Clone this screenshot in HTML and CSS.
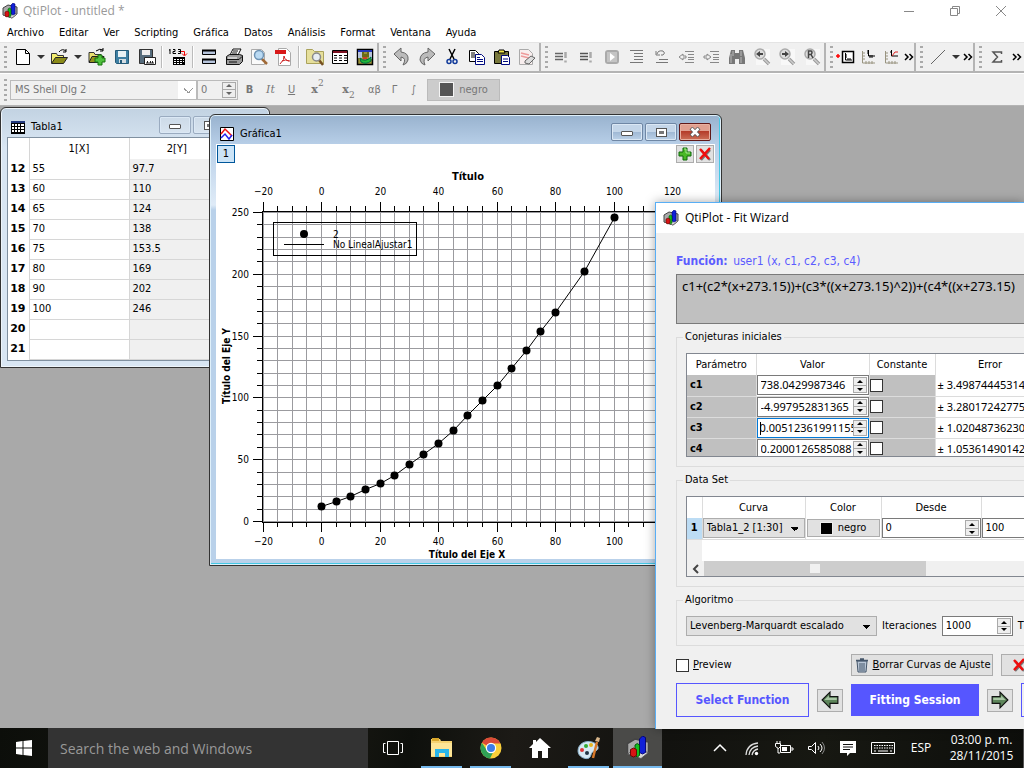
FILE: index.html
```html
<!DOCTYPE html>
<html lang="es">
<head>
<meta charset="utf-8">
<title>QtiPlot - untitled</title>
<link rel="stylesheet" href="styles.css">
</head>
<body>
<svg class="defs" aria-hidden="true">
  <symbol id="logo" viewBox="0 0 16 16"><path d="M1 5l5-3 9 2v7l-5 4-9-3z" fill="#aaa" stroke="#444"/><path d="M1 12l5-3 9 2-5 4z" fill="#d5d5d5" stroke="#555" stroke-width=".6"/><path d="M9 2l2-2 2 1v10l-2 1-2-1z" fill="#1020d8" stroke="#000070" stroke-width=".6"/><path d="M6 6l1.500-1L9 6v7l-1.500 1L6 13z" fill="#10c020" stroke="#004c00" stroke-width=".6"/><path d="M3 9l2-1 2 1v4l-2 1-2-1z" fill="#d81414" stroke="#600" stroke-width=".6"/></symbol>
  <symbol id="cross" viewBox="0 0 16 16"><path d="M4 4l9 10M13 4L4 14" stroke="#777" stroke-width="2.500"/><path d="M3 3l9 10M13 2L3 13" stroke="#f00d0d" stroke-width="2.500"/></symbol>
  <symbol id="lens" viewBox="0 0 20 20"><path d="M4 2h14v16H4z" fill="#f8f8f8"/><path d="M12 12l5 5" stroke="#999" stroke-width="3.500"/><path d="M12 12l5 5" stroke="#ccc" stroke-width="1.500"/><circle cx="8" cy="7" r="5" fill="#ddd" stroke="#aaa" stroke-width="1.500"/></symbol>
  <symbol id="arrow-left" viewBox="0 0 16 16"><path d="M1 8l7-7v4h7v6H8v4z" fill="#5d855a" stroke="#111"/><path d="M3 8l4-4v2h7v2z" fill="#a9c6a4"/></symbol>
  <symbol id="more" viewBox="0 0 10 10"><path d="M1 2l3 3-3 3M5.500 2l3 3-3 3" fill="none" stroke="currentColor" stroke-width="1.500"/></symbol>
  <symbol id="x" viewBox="0 0 12 10"><path d="M2 1l8 8M10 1L2 9" stroke="#555" stroke-width="4"/><path d="M2.500 1.500l7 7M9.500 1.500l-7 7" stroke="#fff" stroke-width="2.500"/></symbol>
</svg>

<div class="app">
  <header class="titlebar">
    <svg class="i16"><use href="#logo"/></svg><span>QtiPlot - untitled *</span>
    <div class="caption">
      <button aria-label="Minimizar"><svg viewBox="0 0 12 12"><path d="M1 6.500h10" stroke="#888"/></svg></button>
      <button aria-label="Restaurar"><svg viewBox="0 0 12 12"><path d="M1.500 3.500h7v7h-7zM3.500 3V1.500h7v7H9" fill="none" stroke="#888"/></svg></button>
      <button aria-label="Cerrar"><svg viewBox="0 0 12 12"><path d="M1 1l10 10M11 1L1 11" stroke="#888"/></svg></button>
    </div>
  </header>
  <nav class="menu"><a href="#">Archivo</a><a href="#">Editar</a><a href="#">Ver</a><a href="#">Scripting</a><a href="#">Gráfica</a><a href="#">Datos</a><a href="#">Análisis</a><a href="#">Format</a><a href="#">Ventana</a><a href="#">Ayuda</a></nav>

  <div class="toolrow">
    <div class="group"><i class="grip"></i>
      <button aria-label="Nuevo"><svg viewBox="0 0 20 20"><path d="M3.500 2.500h9l4 4v11h-13z" fill="#fff" stroke="#000"/><path d="M12.500 2.500v4h4" fill="none" stroke="#000"/></svg></button><button class="drop" aria-label="Opciones de nuevo"></button>
      <button aria-label="Abrir"><svg viewBox="0 0 20 20"><path d="M1.500 16V6.500h5l1 2h6V11" fill="#f4ee70" stroke="#333"/><path d="M1.500 16.500l4-6h12l-4 6z" fill="#8a8a18" stroke="#222"/><path d="M9 5q3-4 7-1m0-2v3h-3" fill="none" stroke="#000"/></svg></button><button class="drop" aria-label="Opciones de abrir"></button>
      <button aria-label="Añadir proyecto"><svg viewBox="0 0 20 20"><path d="M2 15V5.500h5l1 2h6V10" fill="#e9e070" stroke="#333"/><path d="M2 15.500l3-6h12l-3 6z" fill="#92921c" stroke="#222"/><path d="M9 4q4-3 7-1m0-2v3h-3" fill="none" stroke="#000"/><path d="M11 8h4v3h3v4h-3v3h-4v-3H8v-4h3z" fill="#4fc03c" stroke="#14720c"/></svg></button>
      <button aria-label="Guardar"><svg viewBox="0 0 20 20"><path d="M3.500 3.500h13v13h-12l-1-1z" fill="#3e7fa3" stroke="#245a78"/><path d="M6 4h8v6H6z" fill="#e8f1f5"/><path d="M7 12h7v4H7z" fill="#d5dde2"/><path d="M8 13h2v3H8z" fill="#245a78"/></svg></button>
      <button aria-label="Guardar plantilla"><svg viewBox="0 0 20 20"><path d="M2.500 2.500h13v14h-13z" fill="#566c7c" stroke="#333"/><path d="M5 3h8v5H5z" fill="#eee"/><path d="M7.500 10.500h11v7h-11z" fill="#fff" stroke="#222"/><path d="M9 16h8M10.500 14v2M13.500 14v2M15.500 14v2" stroke="#222"/></svg></button>
      <i class="sep"></i>
      <button aria-label="Importar ASCII"><svg viewBox="0 0 20 20"><path d="M2 2v5M1 3h1M5 2.500h2v2H5v2h3M10 2.500h2.500v4H10M10.500 4.500H12" fill="none" stroke="#000"/><path d="M13 4.500h3.500V8M14 6.500l2.500 2.500L19 6.500" fill="none" stroke="#e00"/><path d="M5 10h12v8H5z" fill="#000"/><path d="M6 12h2v1H6zM9 12h2v1H9zM12 12h2v1h-2zM15 12h1v1h-1zM6 14h2v1H6zM9 14h2v1H9zM12 14h2v1h-2zM15 14h1v1h-1zM6 16h2v1H6zM9 16h2v1H9zM12 16h2v1h-2z" fill="#fff"/></svg></button>
      <i class="sep"></i>
      <button aria-label="Explorador"><svg viewBox="0 0 20 20"><path d="M3.500 3.500h13v4h-13zM3.500 12.500h13v4h-13z" fill="#b7c5dc" stroke="#000"/><path d="M3 3.500h14M3 12.500h14" stroke="#000" stroke-width="2"/></svg></button>
      <button aria-label="Imprimir"><svg viewBox="0 0 20 20"><path d="M6 8l3-6h8l-3 6z" fill="#fff" stroke="#111"/><path d="M9 4h5M8 6h5" stroke="#111"/><path d="M2.500 9.500l3-2h10l3 1v6l-3 3h-13z" fill="#999" stroke="#111"/><path d="M3 12.500h12l3-3M5 15h8" fill="none" stroke="#111"/><path d="M4 11h9" stroke="#fff"/></svg></button>
      <button aria-label="Vista previa"><svg viewBox="0 0 20 20"><path d="M2.500 2.500h10l3 3v12h-13z" fill="#fafafa" stroke="#aaa"/><path d="M12 11l6 6" stroke="#a06a38" stroke-width="2.500"/><circle cx="10" cy="8" r="4.500" fill="#badaf3" stroke="#6f94b5" stroke-width="1.500"/></svg></button>
      <button aria-label="Exportar PDF"><svg viewBox="0 0 20 20"><path d="M4.500 1.500h8l4 4v13h-12z" fill="#fff" stroke="#aaa"/><path d="M1 3h11v4H1z" fill="#d81818"/><path d="M6 17q5-5 4-8m0 0q1 5 6 5m-8 0q4-2 7 0" fill="none" stroke="#c22"/></svg></button>
      <i class="sep"></i>
      <button aria-label="Buscar"><svg viewBox="0 0 20 20"><path d="M1.500 16.500v-14h6l2 2h9v12z" fill="#e6df9b" stroke="#aaa25b"/><path d="M14 13l4 5" stroke="#765020" stroke-width="2.500"/><circle cx="11.500" cy="10" r="4" fill="#e7edf2" stroke="#888" stroke-width="1.500"/></svg></button>
      <button aria-label="Tabla nueva"><svg viewBox="0 0 20 20"><path d="M2.500 3.500h15v13h-15z" fill="#fff" stroke="#000"/><path d="M3 4h14v2H3z" fill="#7b0f20"/><path d="M4 8.500h3m2 0h3m2 0h3M4 11h3m2 0h3m2 0h3M4 13.500h3m2 0h3m2 0h3" stroke="#000"/></svg></button>
      <button aria-label="Registro"><svg viewBox="0 0 20 20"><path d="M2.500 2.500h15v15h-15z" fill="#9a9238" stroke="#000" stroke-width="1.500"/><path d="M3 3h14v2H3z" fill="#2437b8"/><path d="M3 5h4v6H3zM14 5h3v7h-3z" fill="#b8c4dc"/><path d="M7 5h2v2h3V5h2v5H7z" fill="#6b6b16"/><path d="M5 11q5 5 11-1v4q-5 4-10 1z" fill="#20b838" stroke="#064"/><path d="M8 11h4" stroke="#d22" stroke-width="1.500"/></svg></button>
    </div>
    <div class="group"><i class="grip"></i>
      <button aria-label="Deshacer"><svg viewBox="0 0 20 20"><path d="M2 7l7-6v4q8 1 7 8-1 4-5 5 4-7-2-8v4z" fill="#bbb" stroke="#666"/></svg></button>
      <button aria-label="Rehacer"><svg viewBox="0 0 20 20"><path d="M18 7l-7-6v4q-8 1-8 8 1 4 5 5-3-7 3-8v4z" fill="#bbb" stroke="#666"/></svg></button>
      <button aria-label="Cortar"><svg viewBox="0 0 20 20"><path d="M7 2l5 10M13 2L8 12" stroke="#000" stroke-width="1.500"/><circle cx="7" cy="14.500" r="2" fill="none" stroke="#113a9a" stroke-width="1.500"/><circle cx="13" cy="14.500" r="2" fill="none" stroke="#113a9a" stroke-width="1.500"/></svg></button>
      <button aria-label="Copiar"><svg viewBox="0 0 20 20"><path d="M2.500 3.500h6l3 3v8h-9z" fill="#fff" stroke="#000"/><path d="M4 6h4M4 8h5M4 10h5" stroke="#000"/><path d="M8.500 7.500h6l3 3v7h-9z" fill="#fff" stroke="#000a80"/><path d="M10 10.500h3m-3 2h6m-6 2h6" stroke="#000a80"/></svg></button>
      <button aria-label="Pegar"><svg viewBox="0 0 20 20"><path d="M2.500 4.500h14v12h-14z" fill="#78783c" stroke="#000"/><path d="M6 6l1-3h5l1 3z" fill="#f4e84c" stroke="#000"/><path d="M9.500 8.500h6l2 2v7h-8z" fill="#fff" stroke="#000a80"/><path d="M11 12h5m-5 2.500h5" stroke="#000a80"/></svg></button>
      <button aria-label="Borrar"><svg viewBox="0 0 20 20"><path d="M2.500 2.500h9l4 4v11h-13z" fill="#f8eeee" stroke="#aaa"/><path d="M4 6l8 2m-8 1l8 2" stroke="#e99" stroke-width="1.500"/><path d="M8 14l6-5 4 2-6 6-4-1z" fill="#ddd" stroke="#666"/></svg></button>
    </div>
    <div class="group dim"><i class="grip"></i>
      <button disabled aria-label="Ejecutar"><svg viewBox="0 0 20 20"><path d="M3 6.500h8M3 9.500h8M3 12.500h8" stroke="#666" stroke-width="1.500"/><path d="M13.500 5v6m0 2.500v2" stroke="#aaa" stroke-width="2.500"/></svg></button>
      <button disabled aria-label="Ejecutar todo"><svg viewBox="0 0 20 20"><path d="M3 6.500h8M3 9.500h8M3 12.500h8" stroke="#555" stroke-width="1.500"/><path d="M13.500 5v6m0 2.500v2" stroke="#aaa" stroke-width="2.500"/></svg></button>
      <button disabled aria-label="Reproducir"><svg viewBox="0 0 20 20"><rect x="3" y="3" width="14" height="14" rx="3" fill="#aaa"/><rect x="5" y="5" width="10" height="10" fill="#c4c4c4"/><path d="M8 6l5 4-5 4z" fill="#fff"/></svg></button>
      <button disabled aria-label="Comentar"><svg viewBox="0 0 20 20"><path d="M3 3.500h13M7 6.500h9M7 9.500h9M7 12.500h9M3 15.500h13" stroke="#777"/></svg></button>
      <button disabled aria-label="Descomentar"><svg viewBox="0 0 20 20"><path d="M4 8V4m0 4h4M5 7q1-4 6-3 3 2 0 4H9M7 12.500h9M4 15.500h12" fill="none" stroke="#777"/></svg></button>
      <button disabled aria-label="Reducir sangría"><svg viewBox="0 0 20 20"><path d="M8 4.500h9M11 7.500h6M11 10.500h6M11 12.500h6M8 15.500h9M2 10l4-3v2h3v2H6v2z" fill="none" stroke="#888"/></svg></button>
      <button disabled aria-label="Aumentar sangría"><svg viewBox="0 0 20 20"><path d="M8 4.500h9M11 7.500h6M11 10.500h6M11 12.500h6M8 15.500h9M9 10L5 7v2H2v2h3v2z" fill="none" stroke="#888"/></svg></button>
      <button aria-label="Encontrar"><svg viewBox="0 0 20 20"><path d="M4 3h4v3h4V3h4l2 8v6h-6v-5H8v5H2v-6z" fill="#777"/><path d="M4 7v9M6 4v5M14 4v5M14 10v6" stroke="#bbb"/></svg></button>
      <button aria-label="Anterior"><svg viewBox="0 0 20 20"><use href="#lens"/><path d="M4 7l4-3v2h3v2H8v2z" fill="#444"/></svg></button>
      <button aria-label="Siguiente"><svg viewBox="0 0 20 20"><use href="#lens"/><path d="M12 7L8 4v2H5v2h3v2z" fill="#444"/></svg></button>
      <button aria-label="Reemplazar"><svg viewBox="0 0 20 20"><use href="#lens"/><path d="M6.500 11V4H9q2 1 0 3.500H7M9 7.500l2 3.500" fill="none" stroke="#444" stroke-width="1.500"/></svg></button>
    </div>
    <div class="group tight"><i class="grip"></i>
      <button aria-label="Añadir capa"><svg viewBox="0 0 20 20"><path d="M0 9h4M2 7v4" stroke="#f00" stroke-width="1.500"/><path d="M6.500 4.500h11v11h-11z" fill="#fff" stroke="#000" stroke-width="1.500"/><path d="M9.500 6v7H16M9 8h2M9 10h2M12 11v2M14 11v2" fill="none" stroke="#000"/></svg></button>
      <button aria-label="Desplazar ejes"><svg viewBox="0 0 20 20"><path d="M3.500 4v12H16M3 6h3M3 9h3M3 12h3M7 14v3M10 14v3M13 14v3" fill="none" stroke="#999480"/><path d="M9.500 3v6H16M8 4h2M8 6h2M11 8v3M13 8v3" fill="none" stroke="#000"/></svg></button>
      <button aria-label="Curva"><svg viewBox="0 0 20 20"><path d="M3.500 4v12H16M3 6h3M3 9h3M3 12h3M7 14v3M10 14v3M13 14v3" fill="none" stroke="#999480"/><path d="M9.500 3v6H16M8 5h2" fill="none" stroke="#000"/><path d="M10 9l3-4h3" fill="none" stroke="#d22"/></svg></button>
      <button class="narrow" aria-label="Más"><svg><use href="#more"/></svg></button>
    </div>
    <div class="group short"><i class="grip"></i>
      <button aria-label="Línea"><svg viewBox="0 0 20 20"><path d="M3 17L17 3" stroke="#666"/></svg></button><button class="drop" aria-label="Opciones de línea"></button>
      <button class="narrow" aria-label="Más"><svg><use href="#more"/></svg></button>
    </div>
    <div class="group short last"><i class="grip"></i>
      <button aria-label="Suma"><svg viewBox="0 0 20 20"><path d="M14.500 7V5H6l4.500 5L6 15h8.500v-2" fill="none" stroke="#555" stroke-width="1.500"/></svg></button>
      <button class="narrow" aria-label="Más"><svg><use href="#more"/></svg></button>
    </div>
  </div>

  <div class="formatrow"><i class="grip"></i>
    <select class="font" disabled aria-label="Fuente"><option>MS Shell Dlg 2</option></select>
    <span class="spin size"><input value="0" disabled aria-label="Tamaño"><span class="steps"><button aria-label="Más"></button><button aria-label="Menos"></button></span></span>
    <button disabled><b>B</b></button><button class="serif" disabled><i>It</i></button><button disabled><u>U</u></button>
    <button class="script" disabled><b>x</b><sup>2</sup></button><button class="script" disabled><b>x</b><sub>2</sub></button>
    <button disabled>αβ</button><button class="thin" disabled>Γ</button><button class="thin" disabled>∫</button>
    <button class="color" disabled><i></i>negro</button>
  </div>

  <main class="mdi">
    <section class="win tabla">
      <header><svg class="i16" viewBox="0 0 16 16"><path d="M1 2h14v13H1z" fill="#000"/><path d="M2 5h2v2H2zM5 5h2v2H5zM8 5h2v2H8zM11 5h3v2h-3zM2 8h2v2H2zM5 8h2v2H5zM8 8h2v2H8zM11 8h3v2h-3zM2 11h2v2H2zM5 11h2v2H5zM8 11h2v2H8zM11 11h3v2h-3z" fill="#fff"/><path d="M1 2h14v2H1z" fill="#223a80"/></svg><h2>Tabla1</h2>
        <div class="ctl"><button aria-label="Minimizar"><i class="min"></i></button><button aria-label="Maximizar"><i class="max"></i></button><button aria-label="Cerrar"><svg><use href="#x"/></svg></button></div></header>
      <div class="pane">
        <table class="sheet">
          <thead><tr><th></th><th>1[X]</th><th>2[Y]</th></tr></thead>
          <tbody>
            <tr><th>12</th><td>55</td><td>97.7</td></tr><tr><th>13</th><td>60</td><td>110</td></tr>
            <tr><th>14</th><td>65</td><td>124</td></tr><tr><th>15</th><td>70</td><td>138</td></tr>
            <tr><th>16</th><td>75</td><td>153.5</td></tr><tr><th>17</th><td>80</td><td>169</td></tr>
            <tr><th>18</th><td>90</td><td>202</td></tr><tr><th>19</th><td>100</td><td>246</td></tr>
            <tr><th>20</th><td></td><td></td></tr><tr><th>21</th><td></td><td></td></tr>
          </tbody>
        </table>
      </div>
    </section>

    <section class="win active grafica">
      <header><svg class="i16" viewBox="0 0 16 16"><path d="M1.500 1.500h13v13h-13z" fill="#fff" stroke="#000"/><path d="M2 8l4-5 3 3 4 4" fill="none" stroke="#e11" stroke-width="1.500"/><path d="M2 12l4-4 4 5 3-4" fill="none" stroke="#22e" stroke-width="1.500"/></svg><h2>Gráfica1</h2>
        <div class="ctl"><button aria-label="Minimizar"><i class="min"></i></button><button aria-label="Maximizar"><i class="max"></i></button><button class="close" aria-label="Cerrar"><svg><use href="#x"/></svg></button></div></header>
      <div class="plot">
        <div class="layers"><button class="layer">1</button><span></span>
          <button aria-label="Añadir capa"><svg class="i16" viewBox="0 0 16 16"><path d="M6 2h4v4h4v4h-4v4H6v-4H2V6h4z" fill="#4ab828" stroke="#0f6a0a"/><path d="M7 3h2v4h4" fill="none" stroke="#a5e690"/></svg></button>
          <button aria-label="Quitar capa"><svg class="i16"><use href="#cross"/></svg></button></div>
        <svg id="chart" viewBox="0 20 499 395" role="img" aria-label="Título"></svg>
      </div>
    </section>
  </main>

  <footer class="taskbar">
    <button class="start" aria-label="Inicio"><svg viewBox="0 0 16 16"><path d="M0 2l6.500-1v6.500H0zM7.500 1L16 0v7.500H7.500zM0 8.500h6.500V15L0 14zM7.500 8.500H16V16l-8.500-1z" fill="#fff"/></svg></button>
    <input class="search" placeholder="Search the web and Windows" aria-label="Buscar">
    <button class="app-btn" aria-label="Vista de tareas"><svg viewBox="0 0 24 24"><path d="M6.500 5.500h11v13h-11zM4.500 7.500h-2v9h2M19.500 7.500h2v9h-2" fill="none" stroke="#fff"/></svg></button>
    <button class="app-btn open" aria-label="Explorador de archivos"><svg viewBox="0 0 24 24"><path d="M1 3h9l1 2h11v16H1z" fill="#f5d271"/><path d="M2 2h7v3H2z" fill="#d9a72b"/><path d="M1 7h21v13H1z" fill="#fde597"/><path d="M5 21v-8h14v8h-4v-4H9v4z" fill="#29b5ea"/></svg></button>
    <button class="app-btn open" aria-label="Chrome"><svg viewBox="0 0 24 24"><circle cx="12" cy="12" r="10.500" fill="#f9cf3a"/><path d="M12 12L2.900 6.750A10.500 10.500 0 0 1 21.500 7.500H12z" fill="#dc4a38"/><path d="M2.900 6.750A10.500 10.500 0 0 0 11 22.500l4-8-7 0z" fill="#2fa156"/><circle cx="12" cy="12" r="5.200" fill="#fff"/><circle cx="12" cy="12" r="4" fill="#3e7de8"/></svg></button>
    <button class="app-btn" aria-label="Inicio web"><svg viewBox="0 0 24 24"><path d="M12 2l11 10h-3v10h-6v-7h-4v7H4V12H1L5 8V4h3v2z" fill="#fff"/></svg></button>
    <button class="app-btn open" aria-label="Paint"><svg viewBox="0 0 24 24"><path d="M1 15C1 8 8 4 15 6s8 8 3 9-3 5-6 7S1 21 1 15z" fill="#d6e8f3" stroke="#8ab0ca"/><circle cx="5" cy="14" r="2" fill="#d33"/><circle cx="9" cy="10" r="2" fill="#3a3"/><circle cx="14" cy="9" r="2" fill="#e5b421"/><circle cx="10" cy="17" r="2" fill="#234"/><path d="M20 6l-4 16" stroke="#d7792b" stroke-width="2.500"/><path d="M18 5l2-4 3 1-1 4z" fill="#d8b68b"/></svg></button>
    <button class="app-btn open current" aria-label="QtiPlot"><svg><use href="#logo"/></svg></button>
    <div class="tray">
      <button aria-label="Mostrar iconos ocultos"><svg viewBox="0 0 20 20"><path d="M4 13l6-6 6 6" fill="none" stroke="#fff" stroke-width="1.500"/></svg></button>
      <button aria-label="Red"><svg viewBox="0 0 20 20"><path d="M4 17Q5 6 16 5M7 17q1-8 9-9M10 17q1-5 6-6" fill="none" stroke="#ddd" stroke-width="1.300"/><circle cx="14.500" cy="15.500" r="1.700" fill="#fff"/></svg></button>
      <button aria-label="Batería"><svg viewBox="0 0 20 20"><path d="M6.500 7.500h10v7h-10zM17 10h2v2h-2M1.500 5.500h5v3l-2 2-3-2zM3 3v2M6 3v2M4 10v5h2" fill="none" stroke="#fff"/><path d="M8 9h5v4H8z" fill="#fff"/></svg></button>
      <button aria-label="Volumen"><svg viewBox="0 0 20 20"><path d="M2.500 8.500h3l4-4v11l-4-4h-3zM12 8q2 2 0 4M14 6q4 4 0 8" fill="none" stroke="#fff"/><path d="M16 4q5 6 0 12" fill="none" stroke="#888"/></svg></button>
      <button aria-label="Notificaciones"><svg viewBox="0 0 20 20"><path d="M2 3h16v12h-6l-3 3v-3H2z" fill="#fff"/><path d="M5 6.500h10M5 9h10M5 11.500h7" stroke="#111"/></svg></button>
      <button class="kbd" aria-label="Teclado"><svg viewBox="0 0 24 14"><path d="M.5 1.500h23v11H.5z" fill="none" stroke="#fff"/><path d="M3 4.500h19M3 7h19" stroke="#fff" stroke-dasharray="1.500 1"/><path d="M3 10h2m2 0h10m2 0h2" stroke="#fff"/></svg></button>
      <button class="lang">ESP</button>
      <button class="clock"><time>03:00 p. m.</time><time>28/11/2015</time></button>
    </div>
  </footer>
</div>

<section class="wizard" role="dialog" aria-labelledby="wt">
  <header><svg class="i16"><use href="#logo"/></svg><h2 id="wt">QtiPlot - Fit Wizard</h2></header>
  <form>
    <p class="func"><label for="f"><b>Función:</b></label> <span>user1 (x, c1, c2, c3, c4)</span></p>
    <textarea id="f" readonly wrap="off">c1+(c2*(x+273.15))+(c3*((x+273.15)^2))+(c4*((x+273.15)</textarea>
    <fieldset><legend>Conjeturas iniciales</legend>
      <div class="box params">
        <table>
          <colgroup><col class="w69"><col class="w113"><col class="w66"><col class="w110"></colgroup>
          <thead><tr><th>Parámetro</th><th>Valor</th><th>Constante</th><th>Error</th></tr></thead>
          <tbody>
            <tr><th>c1</th><td><span class="spin"><input value="738.0429987346" aria-label="c1"><span class="steps"><button type="button" aria-label="Más"></button><button type="button" aria-label="Menos"></button></span></span></td><td class="grey"><input type="checkbox" aria-label="c1 constante"></td><td>± 3.49874445314</td></tr>
            <tr><th>c2</th><td><span class="spin"><input value="-4.997952831365" aria-label="c2"><span class="steps"><button type="button" aria-label="Más"></button><button type="button" aria-label="Menos"></button></span></span></td><td class="grey"><input type="checkbox" aria-label="c2 constante"></td><td>± 3.28017242775</td></tr>
            <tr><th>c3</th><td><span class="spin editing"><input value="0.00512361991155" aria-label="c3"><span class="steps"><button type="button" aria-label="Más"></button><button type="button" aria-label="Menos"></button></span></span></td><td class="grey"><input type="checkbox" aria-label="c3 constante"></td><td>± 1.02048736230</td></tr>
            <tr><th>c4</th><td><span class="spin"><input value="0.2000126585088" aria-label="c4"><span class="steps"><button type="button" aria-label="Más"></button><button type="button" aria-label="Menos"></button></span></span></td><td class="grey"><input type="checkbox" aria-label="c4 constante"></td><td>± 1.05361490142</td></tr>
          </tbody>
        </table>
      </div>
    </fieldset>
    <fieldset><legend>Data Set</legend>
      <div class="box data">
        <table>
          <colgroup><col class="w15"><col class="w103"><col class="w76"><col class="w100"><col class="w100"></colgroup>
          <thead><tr><th></th><th>Curva</th><th>Color</th><th>Desde</th><th></th></tr></thead>
          <tbody><tr><th>1</th><td><select aria-label="Curva"><option>Tabla1_2 [1:30]</option></select></td>
            <td><button type="button" class="color"><i></i>negro</button></td>
            <td><span class="spin"><input value="0" aria-label="Desde"><span class="steps"><button type="button" aria-label="Más"></button><button type="button" aria-label="Menos"></button></span></span></td>
            <td><span class="spin"><input value="100" aria-label="Hasta"></span></td></tr></tbody>
        </table>
        <div class="stub"></div>
        <div class="scroll"><button type="button" aria-label="Desplazar a la izquierda"><svg viewBox="0 0 10 10"><path d="M7 1L3 5l4 4" fill="none" stroke="#444" stroke-width="2"/></svg></button><div class="thumb"><i></i></div></div>
      </div>
    </fieldset>
    <fieldset class="algo"><legend>Algoritmo</legend>
      <select aria-label="Algoritmo"><option>Levenberg-Marquardt escalado</option></select>
      <label for="it">Iteraciones</label>
      <span class="spin"><input id="it" value="1000"><span class="steps"><button type="button" aria-label="Más"></button><button type="button" aria-label="Menos"></button></span></span>
      <span>T</span>
    </fieldset>
    <div class="actions">
      <label><input type="checkbox"> <span><u>P</u>review</span></label>
      <button type="button" class="push"><svg class="i16" viewBox="0 0 16 16"><path d="M3 4h10l-1 11H4z" fill="#b9c6d6" stroke="#45566a"/><path d="M6 6v8M8 6v8M10 6v8" stroke="#45566a"/><path d="M2 3.500h12M6 2h4" stroke="#45566a" stroke-width="1.500"/></svg><span><u>B</u>orrar Curvas de Ajuste</span></button>
      <button type="button" class="push" aria-label="Cerrar"><svg class="i16"><use href="#cross"/></svg></button>
    </div>
    <div class="steps-nav">
      <button type="button" class="page">Select Function</button>
      <button type="button" class="arrow" aria-label="Atrás"><svg><use href="#arrow-left"/></svg></button>
      <button type="button" class="page on">Fitting Session</button>
      <button type="button" class="arrow fwd" aria-label="Adelante"><svg><use href="#arrow-left"/></svg></button>
      <button type="button" class="page" aria-label="Página siguiente"></button>
    </div>
  </form>
</section>
<script src="chart.js"></script>
</body>
</html>
```

FILE: styles.css
```css
* { box-sizing: border-box; }
body { margin: 0; height: 100vh; overflow: hidden; position: relative; font: 11px/14px "DejaVu Sans Condensed", "Noto Sans", sans-serif; color: #000; }
button, input, select, textarea { font: inherit; color: inherit; margin: 0; padding: 0; border: 0; background: none; border-radius: 0; outline: 0; }
button { display: flex; align-items: center; justify-content: center; }
select { appearance: none; }
h2, p { margin: 0; font: inherit; }
.defs { position: absolute; width: 0; height: 0; }
.i16 { width: 16px; height: 16px; flex: none; }

.app { height: 100vh; display: flex; flex-direction: column; }
.titlebar { height: 22px; flex: none; display: flex; align-items: center; gap: 5px; padding-left: 2px; font: 12px/16px "Open Sans", sans-serif; color: #999; background: #fff; }
.caption { margin-left: auto; display: flex; }
.caption button { width: 46px; height: 20px; }
.caption svg { width: 12px; height: 12px; }
.menu { flex: none; height: 20px; display: flex; align-items: center; gap: 15px; padding: 1px 0 0 7px; background: #fff; }
.menu a { color: #000; text-decoration: none; }

.toolrow { flex: none; height: 31px; display: flex; background: #f0f0f0; border-top: 1px solid #e4e4e4; border-bottom: 2px solid #b4b4b4; }
.group { display: flex; align-items: center; flex: none; border-right: 2px solid #b4b4b4; }
.group button { width: 25px; height: 24px; }
.group.tight button { width: 23px; }
.group svg { width: 20px; height: 20px; }
.group button.drop { width: 12px; }
.drop::before { content: ""; border: 4px solid transparent; border-top-color: #333; border-bottom: 0; }
.group button.narrow { width: 11px; }
.group .narrow svg { width: 10px; height: 10px; }
.grip { width: 3px; height: 22px; margin: 0 3px 0 4px; flex: none; background: repeating-linear-gradient(#aaa 0 2px, transparent 2px 5px); }
.dim .grip, .tight .grip { margin-right: 1px; }
.short .grip { margin-right: 2px; }
.group.last { border: 0; }
.last .narrow { margin-left: 2px; }
.sep { width: 2px; height: 22px; margin: 0 2px; border-left: 1px solid #bbb; background: #fff; }

.formatrow { flex: none; height: 33px; display: flex; align-items: center; background: #f0f0f0; border-top: 1px solid #fff; border-bottom: 1px solid #b4b4b4; color: #777; }
.formatrow select.font { width: 187px; height: 20px; padding-left: 4px; border: 1px solid #bbb; opacity: 1; background: linear-gradient(-135deg, transparent 44%, #999 44% 60%, transparent 60%) 173px 7px / 5px 5px no-repeat, linear-gradient(135deg, transparent 44%, #999 44% 60%, transparent 60%) 177px 7px / 5px 5px no-repeat, linear-gradient(#fff, #fff) 100% 0 / 18px 100% no-repeat, #f0f0f0; color: #777; }
.formatrow > button { width: 21px; height: 21px; }
.formatrow > button.serif { font-family: "DejaVu Serif", serif; }
.formatrow > button.script { width: 31px; font-family: "DejaVu Serif", serif; }
.formatrow > button.thin { width: 19px; }
.script sup, .script sub { font-size: 9px; line-height: 9px; }
.script sup { align-self: flex-start; }
.script sub { align-self: flex-end; }
.color i { width: 13px; height: 13px; border: 1px solid #eee; background: #000; margin-right: 5px; flex: none; }
.formatrow > button.color { width: 73px; height: 22px; background: #ccc; border: 1px solid #bbb; margin-left: 4px; }
.formatrow .color i { background: #555; border-color: #f4f4f4; width: 15px; height: 15px; }

.spin { display: flex; height: 20px; border: 1px solid #7a7a7a; background: #fff; align-items: center; }
.spin input { flex: 1; min-width: 0; width: 100%; padding-left: 3px; }
.spin .steps { width: 14px; height: 16px; flex: none; display: flex; flex-direction: column; margin-right: 1px; }
.steps button { flex: 1; width: 100%; background: #eee; border: 1px solid #aaa; }
.steps button + button { border-top: 0; }
.steps button::before { content: ""; border: 3px solid transparent; border-top: 0; border-bottom-color: #000; }
.steps button + button::before { border-top: 3px solid #000; border-bottom: 0; }
.size { width: 41px; background: #f0f0f0; border-color: #bbb; margin-right: 1px; }
.size .steps button::before { border-bottom-color: #666; }
.size .steps button + button::before { border-top-color: #666; }
.spin.editing { border-color: #0078d7; }
.spin.editing input { padding-left: 2px; background: linear-gradient(#000, #000) 2px 1px / 1px 13px no-repeat; }

.mdi { flex: 1; min-height: 0; position: relative; overflow: hidden; background: #a9a9a9; }
.win { position: absolute; border: 1px solid #333; border-radius: 6px 6px 0 0; background: linear-gradient(#c2d2e2, #d9e6f3 40px); padding: 0 6px 6px; box-shadow: inset 0 0 0 1px #eef5fb; }
.win header { height: 29px; padding: 8px 2px 0 3px; display: flex; align-items: center; gap: 5px; }
.win.active { background: linear-gradient(#98b2ce, #b8cfe8 30px, #dfebf7 90px, #b9d1ea 95px); box-shadow: inset 0 0 0 1px #dff0fa, inset -1px -1px 0 1px #44c8e4; }
.ctl { margin: 0 2px 3px auto; display: flex; gap: 2px; }
.ctl button { width: 32px; height: 18px; border: 1px solid #6f87a5; border-radius: 2px; background: linear-gradient(#c4d6e9 50%, #9fb8d4 50%, #bcd2e9); box-shadow: inset 0 0 0 1px #dbe8f5; }
.tabla .ctl button { background: linear-gradient(#ccdae8, #d8e4f0); border-color: #9aabc0; }
.ctl .close { background: linear-gradient(#e0a090 45%, #b43b28 45%, #cc7058); border-color: #601818; box-shadow: inset 0 0 0 1px #e8b0a0; }
.ctl svg { width: 12px; height: 10px; }
.min { width: 12px; height: 5px; border: 1px solid #555; background: #fff; border-radius: 1px; margin-top: 3px; }
.max { width: 11px; height: 9px; border: 1px solid #555; background: #777; box-shadow: inset 0 0 0 2px #fff; }
.tabla { left: 0; top: 1px; width: 270px; }
.pane { border: 1px solid #8090a0; background: #fff; overflow: hidden; }
.sheet { width: 100%; table-layout: fixed; border-collapse: collapse; }
.sheet th, .sheet td { height: 20px; padding: 0 3px; border-right: 1px solid #d6d6d6; border-bottom: 1px solid #d6d6d6; text-align: left; }
.sheet th:first-child { width: 21px; padding: 0 3px 0 0; text-align: right; border-bottom: 0; font: bold 11px/14px "DejaVu Sans", sans-serif; }
.sheet thead th { height: 21px; text-align: center; font-weight: normal; border-bottom: 0; }
.sheet thead th:nth-child(2) { width: 100px; }
.sheet thead th:nth-child(3) { padding-right: 40px; }
.sheet td:last-child { background: #f0f0f0; }
.grafica { left: 209px; top: 8px; width: 513px; }
.plot { background: #fff; }
.layers { display: flex; gap: 2px; padding: 1px; }
.layers span { flex: 1; }
.layers button { width: 18px; height: 18px; border: 1px solid #adadad; background: #e1e1e1; }
.layers .layer { border-color: #00579b; background: #cce4f7; }
#chart { display: block; width: 100%; font: 10px "DejaVu Sans Condensed", sans-serif; }
#chart .bold { font-weight: bold; }
#chart .name { font: bold 11px "DejaVu Sans Condensed", sans-serif; }
#chart .grid { stroke: #9b9b9f; shape-rendering: crispEdges; }
#chart .axis { stroke: #000; fill: none; shape-rendering: crispEdges; }
#chart .curve { stroke: #000; fill: none; }

.wizard { position: absolute; left: 655px; right: 0; top: 202px; overflow: hidden; border: solid #58aef5; border-width: 1px 0 0 1px; background: #f0f0f0; box-shadow: 0 0 10px rgba(0, 0, 0, .35); white-space: nowrap; }
.wizard header { height: 30px; display: flex; align-items: center; gap: 6px; padding-left: 7px; background: #fff; font: 12px/16px "Open Sans", sans-serif; }
.wizard form { padding: 19px 0 12px 20px; width: 500px; }
.func { color: #5b5bff; font-size: 12px; line-height: 18px; margin-bottom: 4px; }
.func span { margin-left: 2px; }
textarea { display: block; width: 100%; height: 50px; resize: none; overflow: hidden; padding: 3px 5px; border: 1px solid #7a7a7a; background: #c0c0c0; font: 13px/16px "Noto Sans", sans-serif; }
fieldset { margin: 6px 0 0; padding: 9px; border: 1px solid #dcdcdc; min-width: 0; }
legend { margin-left: -3px; padding: 0 2px; }
.box { border: 1px solid #828790; background: #fff; overflow: hidden; }
.box table { border-collapse: collapse; table-layout: fixed; width: 0; min-width: 358px; }
.data table { min-width: 394px; }
.w69 { width: 69px; } .w113 { width: 113px; } .w66 { width: 66px; } .w110 { width: 110px; }
.w15 { width: 15px; } .w103 { width: 103px; } .w76 { width: 76px; } .w100 { width: 100px; }
.box th, .box td { padding: 0; height: 21px; font-weight: normal; border-right: 1px solid #dcdcdc; border-bottom: 1px solid #dcdcdc; }
.box thead th { height: 21px; border-bottom: 0; }
.params { height: 104px; }
.params tbody th { text-align: left; padding-left: 3px; font-weight: bold; background: #c0c0c0; }
.params td { font-family: "Noto Sans", sans-serif; }
.params td.grey { background: #c0c0c0; }
.params td:last-child { padding-left: 2px; }
.data { height: 81px; display: flex; flex-direction: column; }
.data tbody th { background: #bcdcf4; font-weight: bold; }
.box .spin { height: 20px; }
input[type=checkbox] { appearance: none; display: block; width: 13px; height: 13px; border: 1px solid #333; background: #fff; flex: none; }
.wizard select { height: 20px; width: 100%; padding-left: 3px; border: 1px solid #adadad; background: linear-gradient(to bottom right, #000 50%, transparent 50%) calc(100% - 5px) 8px / 4px 4px no-repeat, linear-gradient(to bottom left, #000 50%, transparent 50%) calc(100% - 9px) 8px / 4px 4px no-repeat, #e1e1e1; }
.data .color { width: 73px; height: 18px; margin: 0 1px; border: 1px solid #adadad; background: #e1e1e1; }
.stub { flex: 1; width: 15px; background: #f0f0f0; }
.scroll { height: 15px; display: flex; background: #f0f0f0; }
.scroll button { width: 17px; }
.scroll svg { width: 10px; height: 10px; }
.thumb { width: 222px; background: #cdcdcd; display: flex; align-items: center; justify-content: center; }
.thumb i { width: 10px; height: 9px; background: #f0f0f0; }
.algo { display: flex; align-items: center; gap: 5px; }
.wizard .algo select { width: 191px; }
.algo .spin { width: 71px; }
.actions { display: flex; align-items: center; gap: 8px; margin-top: 8px; }
.actions label { width: 167px; display: flex; align-items: center; gap: 4px; }
.push { height: 22px; width: 142px; gap: 3px; border: 1px solid #adadad; background: #e1e1e1; }
.push:last-child { width: 36px; }
.steps-nav { display: flex; align-items: center; gap: 8px; margin-top: 7px; }
.page { width: 133px; height: 34px; border: 1px solid #5656ff; color: #5656ff; font: bold 12px/16px "DejaVu Sans Condensed", sans-serif; }
.page.on { width: 128px; height: 32px; background: #5656ff; color: #fff; }
.arrow { width: 26px; height: 23px; border: 1px solid #adadad; background: #e1e1e1; }
.arrow svg { width: 18px; height: 18px; }
.fwd svg { transform: scaleX(-1); }

.taskbar { flex: none; height: 40px; display: flex; color: #fff; background: linear-gradient(100deg, #0c0e0a, #1b1a14 30%, #0e100c 40%, #1c1a16 50%, #12120f 65%, #171812 80%, #0d0e0b); font-family: "Open Sans", sans-serif; }
.start { width: 48px; }
.start svg { width: 16px; height: 16px; }
.search { width: 320px; padding-left: 12px; background: #333; font-size: 14px; }
.search::placeholder { color: #999; opacity: 1; }
.app-btn { width: 49px; border: solid transparent; border-width: 2px 4px; }
.app-btn svg { width: 24px; height: 24px; }
.open { border-bottom: 0; padding-bottom: 2px; background: linear-gradient(#76b9ed, #76b9ed) 0 100% / 100% 2px no-repeat padding-box; }
.current { border-left: 0; border-right: 0; background-color: #4a4a48; background-clip: border-box; }
.tray { margin-left: auto; display: flex; align-items: center; }
.tray button { width: 32px; height: 40px; }
.tray svg { width: 20px; height: 20px; }
.tray .kbd { width: 38px; }
.tray .kbd svg { width: 24px; height: 14px; }
.tray .lang { width: 38px; font-size: 12px; }
.tray .clock { flex-direction: column; width: 84px; font-size: 12px; line-height: 16px; border-right: 1px solid #555; }
```

FILE: chart.js
```js
const chart = document.getElementById('chart');
const px = v => Math.round(105 + v * 2.925) + 0.5;
const py = v => Math.round(377 - v * 1.236) + 0.5;
const points = [[0, 12.5], [5, 16.5], [10, 20.5], [15, 26], [20, 31], [25, 37.5], [30, 46], [35, 54.5],
  [40, 63.5], [45, 74], [50, 85.5], [55, 97.7], [60, 110], [65, 124], [70, 138], [75, 153.5], [80, 169], [90, 202], [100, 246]];

function add(tag, attrs, text) {
  const el = document.createElementNS('http://www.w3.org/2000/svg', tag);
  for (const key in attrs) el.setAttribute(key, attrs[key]);
  if (text !== undefined) el.textContent = text;
  chart.appendChild(el);
}

let grid = '', axis = 'M46.500 67.500H482M46.500 378.500H482M46.500 67V379';
for (let v = -20; v <= 120; v += 5) {
  const major = v % 20 === 0;
  grid += `M${px(v)} 68V378`;
  axis += `M${px(v)} ${major ? 58 : 62}V67M${px(v)} 378V${major ? 388 : 383}`;
}
for (let v = 0; v <= 250; v += 10) {
  grid += `M47 ${py(v)}H482`;
  axis += `M${v % 50 === 0 ? 37 : 41} ${py(v)}H47`;
}
add('path', { class: 'grid', d: grid });
add('path', { class: 'axis', d: axis });

for (let v = -20; v <= 120; v += 20) {
  const label = String(v).replace('-', '−');
  add('text', { x: px(v), y: 51, 'text-anchor': 'middle' }, label);
  if (v < 120) add('text', { x: px(v), y: 401, 'text-anchor': 'middle' }, label);
}
for (let v = 0; v <= 250; v += 50) add('text', { x: 33, y: py(v) + 3, 'text-anchor': 'end' }, v);

add('path', { class: 'curve', d: 'M' + points.map(p => px(p[0]) + ' ' + py(p[1])).join('L') });
for (const p of points) add('circle', { cx: px(p[0]), cy: py(p[1]), r: 4 });

add('path', { class: 'axis', d: 'M57.500 78.500H200.500V111.500H57.500ZM68 100.500H108' });
add('circle', { cx: 88, cy: 90, r: 4 });
add('text', { x: 117, y: 94 }, '2');
add('text', { x: 117, y: 104 }, 'No LinealAjustar1');
add('text', { class: 'name', x: 252, y: 36, 'text-anchor': 'middle' }, 'Título');
add('text', { class: 'bold', x: 251, y: 414, 'text-anchor': 'middle' }, 'Título del Eje X');
add('text', { class: 'bold', transform: 'translate(14 222) rotate(-90)', 'text-anchor': 'middle' }, 'Título del Eje Y');
```
